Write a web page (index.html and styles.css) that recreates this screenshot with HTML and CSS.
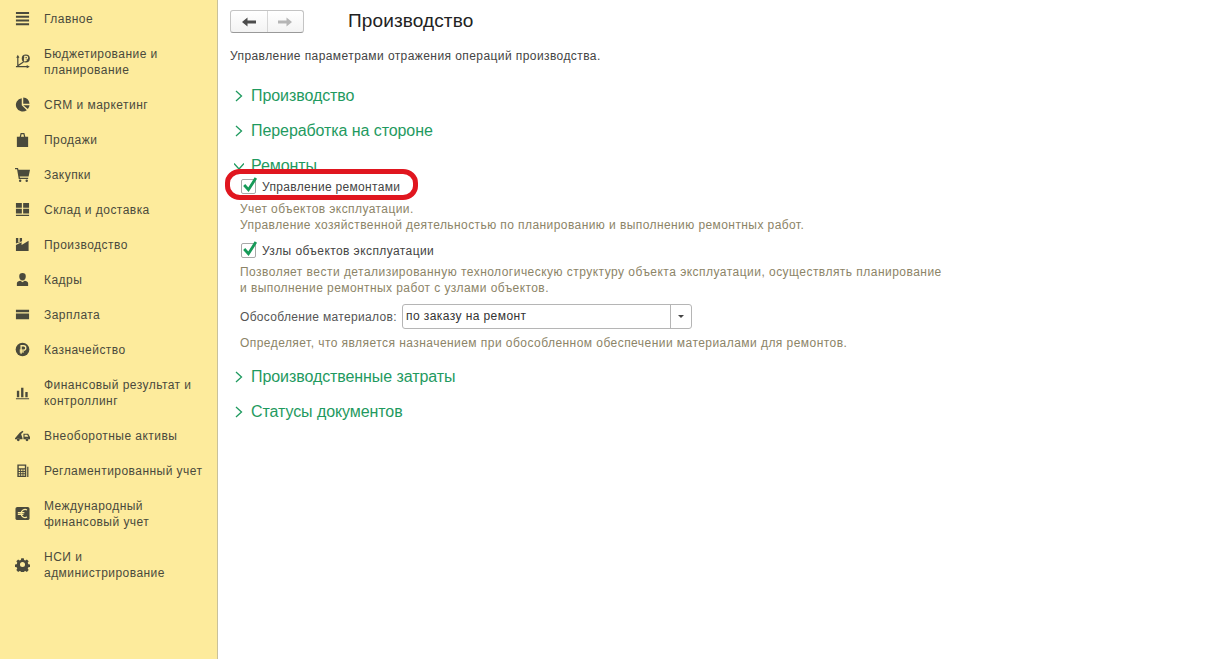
FILE: index.html
```html
<!DOCTYPE html>
<html lang="ru">
<head>
<meta charset="utf-8">
<title>Производство</title>
<link rel="stylesheet" href="styles.css">
</head>
<body>
<div class="app">
  <nav class="side">
    <a class="item"><svg class="ico" viewBox="0 0 16 16"><path d="M1 1h14v2.200H1zM1 5h14v2.200H1zM1 9h14v2.200H1zM1 13h14v2.200H1z"/></svg><span>Главное</span></a>
    <a class="item two"><svg class="ico" viewBox="0 0 16 16"><path class="ln" d="M3 3v10M1 13.500h12M3 12.500l6-4"/><path d="M1.300 4L3 0.800 4.700 4zM12.500 11.800l3.300 1.700-3.300 1.700z"/><circle cx="11.500" cy="4.800" r="4.300"/><path class="rv" d="M10.500 8V2.600h1.600a1.300 1.300 0 0 1 0 2.600H9.500M9.500 6.700h3"/></svg><span>Бюджетирование и<br>планирование</span></a>
    <a class="item"><svg class="ico" viewBox="0 0 16 16"><path d="M7.200 1.200v7.600l5.400 5.200A7.200 7.200 0 1 1 7.200 1.200z"/><path d="M8.800 0.600a7.400 7.400 0 0 1 6.700 6.600H8.800zM8.800 8.800h6.700a7.300 7.300 0 0 1-1.800 4z"/></svg><span>CRM и маркетинг</span></a>
    <a class="item"><svg class="ico" viewBox="0 0 16 16"><path fill-rule="evenodd" d="M2 5h3l1-4h4l1 4h3v11H2zM6.400 5h3.200l-.6-2.700H7z"/></svg><span>Продажи</span></a>
    <a class="item"><svg class="ico" viewBox="0 0 16 16"><path d="M0 1h3.200l.5 1.800H16l-1.500 7.200H5l.3 1.500H14v1.300H4L2.200 2.300H0z"/><circle cx="5.500" cy="14.700" r="1.300"/><circle cx="12.500" cy="14.700" r="1.300"/></svg><span>Закупки</span></a>
    <a class="item"><svg class="ico" viewBox="0 0 16 16"><path d="M1 1h6.300v5H1zM8.700 1H15v5H8.700zM1 7.300h6.300v5H1zM8.700 7.300H15v5H8.700zM1 13.500h14V15H1z"/></svg><span>Склад и доставка</span></a>
    <a class="item"><svg class="ico" viewBox="0 0 16 16"><path d="M1 1h2.500v5.500L5 6V1h2.500v3.500L1 7zM1 8.500l6-3v3l7.500-4.500V15H1z"/></svg><span>Производство</span></a>
    <a class="item"><svg class="ico" viewBox="0 0 16 16"><path d="M4.500 4.500a3.500 3.500 0 0 1 7 0c0 2.500-1.200 4.500-3.500 4.500S4.500 7 4.500 4.500zM2 12c0-1.500 2-2.300 3.800-2.600L8 11l2.200-1.600c1.800.3 3.800 1.100 3.800 2.600v3H2z"/></svg><span>Кадры</span></a>
    <a class="item"><svg class="ico" viewBox="0 0 16 16"><path d="M1 3h14v2.500H1zM1 7h14v6H1z"/></svg><span>Зарплата</span></a>
    <a class="item"><svg class="ico" viewBox="0 0 16 16"><circle cx="8" cy="8" r="7.300"/><path class="rv" d="M6.500 12.500V4h2.700a2.300 2.300 0 0 1 0 4.600H5M5 10.500h4.500"/></svg><span>Казначейство</span></a>
    <a class="item two"><svg class="ico" viewBox="0 0 16 16"><path d="M2 6h2.500v7H2zM6.500 3h2.500v10H6.500zM11 7.500h2.500V13H11zM1 14h14v1.300H1z"/></svg><span>Финансовый результат и<br>контроллинг</span></a>
    <a class="item"><svg class="ico" viewBox="0 0 16 16"><path d="M0 11l5-6 3-2 1 1-2.500 2.500 1.500 4.500v1H5a1.600 1.600 0 0 0-3 0H0zM9 6h5l2 3.500V12h-1.500a1.800 1.800 0 0 0-3.300 0H9zM10.200 7.200v2.200h4l-1.200-2.200z"/><circle cx="3.500" cy="12.500" r="1.500"/><circle cx="12.800" cy="12.500" r="1.500"/></svg><span>Внеоборотные активы</span></a>
    <a class="item"><svg class="ico" viewBox="0 0 16 16"><path fill-rule="evenodd" d="M2.500 1.500h9.500V15H2.500zM4 3v2.500h6.500V3zM4 7v1.500h1.500V7zM6.500 7v1.500H8V7zM9 7v1.500h1.500V7zM4 9.500V11h1.500V9.500zM6.500 9.500V11H8V9.500zM9 9.500V11h1.500V9.500zM4 12v1.500h1.500V12zM6.500 12v1.500H8V12zM9 12v1.500h1.500V12z"/><path d="M13 4h1.300v11H13z"/></svg><span>Регламентированный учет</span></a>
    <a class="item two"><svg class="ico" viewBox="0 0 16 16"><rect x="0.500" y="1" width="15" height="14" rx="2"/><path class="rv wide" d="M12.800 4.200a4.300 4.300 0 1 0 0 7.600M3 7h7M3 9h6"/></svg><span>Международный<br>финансовый учет</span></a>
    <a class="item two"><svg class="ico" viewBox="0 0 16 16"><path fill-rule="evenodd" d="M6.500 1h3l.4 2 1.500.7 1.800-1.100 2.100 2.100-1.100 1.800.7 1.500 2 .4v3l-2 .4-.7 1.500 1.100 1.800-2.100 2.100-1.800-1.100-1.500.7-.4 2h-3l-.4-2-1.500-.7-1.800 1.100-2.100-2.100 1.100-1.800-.7-1.500-2-.4v-3l2-.4.7-1.500-1.100-1.800 2.100-2.100 1.800 1.100 1.500-.7zM8 5.500a3 3 0 1 0 0 6 3 3 0 0 0 0-6z" transform="translate(.8 .4) scale(.9)"/></svg><span>НСИ и<br>администрирование</span></a>
  </nav>
  <main class="main">
    <header class="top">
      <div class="nav-group">
        <button class="nav-btn"><svg viewBox="0 0 14 10" class="arrow"><path d="M0 5l5.500-4.500v3H14v3H5.500v3z"/></svg></button>
        <button class="nav-btn off"><svg viewBox="0 0 14 10" class="arrow"><path d="M14 5L8.500.5v3H0v3h8.500v3z"/></svg></button>
      </div>
      <h1 class="title">Производство</h1>
    </header>
    <p class="lead">Управление параметрами отражения операций производства.</p>

    <h2 class="sec"><svg class="chev" viewBox="0 0 10 12"><path d="M2 1l5.500 5L2 11"/></svg>Производство</h2>
    <h2 class="sec"><svg class="chev" viewBox="0 0 10 12"><path d="M2 1l5.500 5L2 11"/></svg>Переработка на стороне</h2>
    <h2 class="sec open"><svg class="chev" viewBox="0 0 10 12"><path d="M0 3.500l5 5.500 5-5.500"/></svg>Ремонты</h2>

    <section class="body">
      <label class="check narrow"><span class="box"><svg viewBox="0 0 16 16"><path d="M3 7.500l4 4.500 7-11"/></svg></span>Управление ремонтами</label>
      <p class="hint">Учет объектов эксплуатации.<br>Управление хозяйственной деятельностью по планированию и выполнению ремонтных работ.</p>
      <label class="check second"><span class="box"><svg viewBox="0 0 16 16"><path d="M3 7.500l4 4.500 7-11"/></svg></span>Узлы объектов эксплуатации</label>
      <p class="hint"><span class="loose">Позволяет вести детализированную технологическую структуру объекта эксплуатации, осуществлять планирование</span><br>и выполнение ремонтных работ с узлами объектов.</p>
      <div class="field">
        <span class="field-label">Обособление материалов:</span>
        <div class="select"><span class="value">по заказу на ремонт</span><span class="drop"></span></div>
      </div>
      <p class="hint after-field">Определяет, что является назначением при обособленном обеспечении материалами для ремонтов.</p>
    </section>

    <h2 class="sec"><svg class="chev" viewBox="0 0 10 12"><path d="M2 1l5.500 5L2 11"/></svg>Производственные затраты</h2>
    <h2 class="sec"><svg class="chev" viewBox="0 0 10 12"><path d="M2 1l5.500 5L2 11"/></svg>Статусы документов</h2>

    <div class="mark"></div>
  </main>
</div>
</body>
</html>
```
FILE: styles.css
```css
* { box-sizing: border-box; }
html, body { margin: 0; height: 100%; background: #fff; }
body { font-family: "Liberation Sans", Arial, sans-serif; font-size: 12px; letter-spacing: .42px; color: #444; overflow: hidden; }
.app { display: flex; height: 659px; }

.side { width: 218px; flex: none; background: #fdeb9c; border-right: 1px solid #c9c19a; padding-top: 1px; display: flex; flex-direction: column; }
.item { display: flex; align-items: center; height: 35px; padding-left: 15px; color: #4a4a3c; line-height: 16px; letter-spacing: .46px; }
.item.two { height: 51px; }
.ico { width: 15px; height: 15px; margin-right: 14px; flex: none; fill: #4a4a3c; }
.ln { fill: none; stroke: #4a4a3c; stroke-width: 1.300; }
.rv { fill: none; stroke: #fdeb9c; stroke-width: 1.400; }
.wide { stroke-width: 1.300; }

.main { flex: 1; position: relative; padding: 10px 12px 0; }
.top { display: flex; align-items: center; height: 23px; }
.nav-group { display: flex; width: 74px; height: 23px; border: 1px solid #c4c4c4; border-bottom-color: #999; border-radius: 3px; background: linear-gradient(#fff, #f3f3f3); }
.nav-btn { flex: 1; padding: 0; border: 0; background: none; display: flex; align-items: center; justify-content: center; }
.nav-btn + .nav-btn { border-left: 1px solid #d6d6d6; }
.arrow { width: 14px; height: 10px; fill: #4c4c4c; }
.off .arrow { fill: #b5b5b5; }
.title { margin: 0 0 2px 44px; font-size: 19px; font-weight: 400; letter-spacing: .12px; color: #222; line-height: 23px; }
.lead { margin: 15px 0 0; line-height: 16px; color: #444; }

.sec { display: flex; align-items: center; margin: 0; height: 35px; font-size: 16px; font-weight: 400; letter-spacing: -.08px; color: #1f9a5f; padding-left: 4px; }
.lead + .sec { margin-top: 14px; }
.chev { width: 10px; height: 12px; margin-right: 7px; fill: none; stroke: #1f9a5f; stroke-width: 1.300; flex: none; }
.open { margin-bottom: -4px; }

.body { padding: 0 0 8px 10px; position: relative; }
.check { display: flex; align-items: center; height: 15px; color: #444; }
.narrow { letter-spacing: .32px; }
.second { margin-top: 10px; }
.box { width: 15px; height: 15px; margin: 0 6px 0 1px; border: 1px solid #a8a8a8; border-radius: 2px; background: #fff; flex: none; position: relative; }
.box svg { position: absolute; left: -1px; top: -3px; width: 17px; height: 17px; fill: none; stroke: #169a58; stroke-width: 2.600; }
.hint { margin: 6px 0 0; color: #8c8467; line-height: 16px; }
.narrow + .hint { margin-top: 7px; }
.loose { letter-spacing: .47px; }
.after-field { letter-spacing: .45px; }
.field { display: flex; align-items: center; margin-top: 8px; height: 25px; }
.field-label { color: #555; width: 162px; flex: none; letter-spacing: .33px; }
.select { display: flex; width: 290px; height: 25px; border: 1px solid #b5b5b5; border-radius: 3px; background: #fff; }
.value { flex: 1; padding-left: 3px; line-height: 23px; color: #333; }
.drop { width: 21px; border-left: 1px solid #b5b5b5; position: relative; }
.drop::after { content: ""; position: absolute; left: 7px; top: 10px; border: 3px solid transparent; border-top: 3px solid #444; }

.mark { position: absolute; left: 7px; top: 169px; width: 193px; height: 31px; border: 5px solid #e0161f; border-radius: 15px / 14px; }
```
